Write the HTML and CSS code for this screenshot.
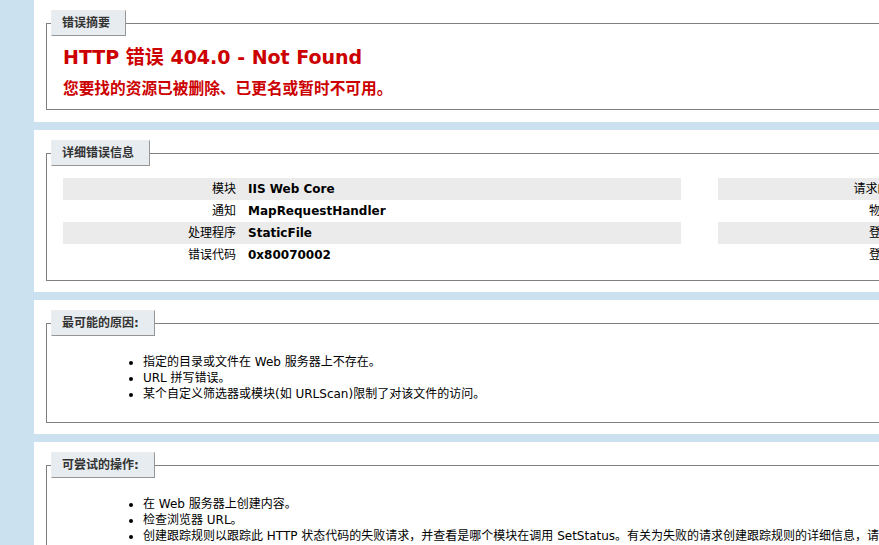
FILE: index.html
```html
<!DOCTYPE html>
<html lang="zh-CN">
<head>
<meta charset="utf-8">
<title>IIS 7.5 详细错误 - 404.0 - Not Found</title>
<link rel="stylesheet" href="styles.css">
</head>
<body>
<div id="content">
  <div class="content-container summary">
    <fieldset>
      <legend>错误摘要</legend>
      <h2>HTTP 错误 404.0 - Not Found</h2>
      <h3>您要找的资源已被删除、已更名或暂时不可用。</h3>
    </fieldset>
  </div>

  <div class="content-container">
    <fieldset>
      <legend>详细错误信息</legend>
      <div class="details">
        <table class="details-left">
          <tr class="alt"><th>模块</th><td>IIS Web Core</td></tr>
          <tr><th>通知</th><td>MapRequestHandler</td></tr>
          <tr class="alt"><th>处理程序</th><td>StaticFile</td></tr>
          <tr><th>错误代码</th><td>0x80070002</td></tr>
        </table>
        <table class="details-right">
          <tr class="alt"><th>请求的 URL</th><td>http://localhost:80/favicon.ico</td></tr>
          <tr><th>物理路径</th><td>C:\inetpub\wwwroot\favicon.ico</td></tr>
          <tr class="alt"><th>登录方法</th><td>匿名</td></tr>
          <tr><th>登录用户</th><td>匿名</td></tr>
        </table>
      </div>
    </fieldset>
  </div>

  <div class="content-container">
    <fieldset>
      <legend>最可能的原因:</legend>
      <ul>
        <li>指定的目录或文件在 Web 服务器上不存在。</li>
        <li>URL 拼写错误。</li>
        <li>某个自定义筛选器或模块(如 URLScan)限制了对该文件的访问。</li>
      </ul>
    </fieldset>
  </div>

  <div class="content-container">
    <fieldset>
      <legend>可尝试的操作:</legend>
      <ul>
        <li>在 Web 服务器上创建内容。</li>
        <li>检查浏览器 URL。</li>
        <li>创建跟踪规则以跟踪此 HTTP 状态代码的失败请求，并查看是哪个模块在调用 SetStatus。有关为失败的请求创建跟踪规则的详细信息，请单击<a href="#">此处</a>。</li>
      </ul>
    </fieldset>
  </div>
</div>
</body>
</html>
```

FILE: styles.css
```css
html {
  overflow: hidden;
}

body {
  margin: 0;
  background: #CBE1EF;
  color: #000;
  font-family: "DejaVu Sans", "Noto Sans CJK SC", sans-serif;
  font-size: 12px;
  line-height: 16px;
}

#content {
  margin-left: 34px;
}

.content-container {
  background: #fff;
  width: 1776px;
  padding: 10px;
  margin-bottom: 8px;
}

.summary {
  padding-bottom: 11px;
}

fieldset {
  margin: 0 2px 1px 2px;
  padding: 0 16px 10px 16px;
  border: 1px solid #808080;
  min-width: 0;
}

.summary fieldset {
  padding-bottom: 11px;
}

legend {
  color: #333333;
  padding: 4px 15px 4px 10px;
  margin: 0 0 8px -12px;
  border-top: 1px solid #EDEDED;
  border-left: 1px solid #EDEDED;
  border-right: 1px solid #969696;
  border-bottom: 1px solid #969696;
  background: #E7ECF0;
  font-weight: bold;
  font-size: 12px;
  line-height: 16px;
}

h2 {
  margin: 0;
  font-size: 19px;
  line-height: 26px;
  color: #CC0000;
}

h3 {
  margin: 10px 0 0 0;
  font-size: 15.7px;
  line-height: 18px;
  color: #CC0000;
}

.details {
  display: flex;
  gap: 37px;
}

table {
  margin: 4px 0;
  border: none;
  border-collapse: collapse;
  border-spacing: 0;
}

.details-left {
  width: 618px;
}

.details-right {
  width: 1083px;
}

th,
td {
  vertical-align: top;
  padding: 3px 0;
  border: none;
}

th {
  box-sizing: border-box;
  width: 185px;
  padding-right: 12px;
  text-align: right;
  font-weight: normal;
}

.details-right th {
  width: 217px;
  padding-right: 18px;
}

td {
  text-align: left;
  font-weight: bold;
}

tr.alt th,
tr.alt td {
  background: #ebebeb;
}

ul {
  margin: 10px 0 10px 40px;
  padding-left: 40px;
}

a:link,
a:visited {
  color: #007EFF;
  font-weight: bold;
}
```
